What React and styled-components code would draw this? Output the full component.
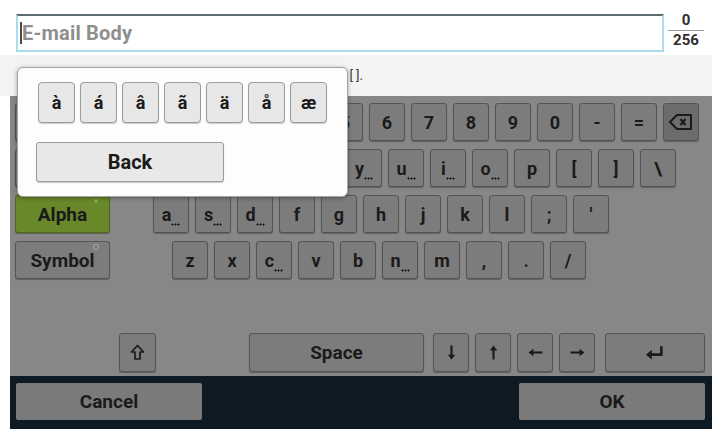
import React from "react";
import styled, { createGlobalStyle } from "styled-components";

const Global = createGlobalStyle`
  html, body { margin: 0; padding: 0; background: #ffffff; }
  body { font-family: Roboto, "Liberation Sans", Arial, sans-serif; }
  * { box-sizing: border-box; }
`;

const Screen = styled.div`
  position: relative;
  width: 712px;
  height: 432px;
  background: #ffffff;
  overflow: hidden;
  display: flex;
  flex-direction: column;
`;

const Header = styled.div`
  height: 55px;
  display: flex;
  align-items: flex-start;
  padding: 14px 0 0 16px;
  background: #ffffff;
`;

const Field = styled.div`
  width: 648px;
  height: 38px;
  border: 2px solid #a9dcef;
  border-top: 2px solid #5d6b70;
  background: #ffffff;
  display: flex;
  align-items: center;
  padding-left: 2px;
`;

const Caret = styled.span`
  width: 2px;
  height: 22px;
  background: #4a4a4a;
`;

const Placeholder = styled.span`
  font-size: 20px;
  font-weight: 700;
  color: #8e8e8e;
  letter-spacing: 0.2px;
`;

const Counter = styled.div`
  width: 38px;
  margin-left: 3px;
  margin-top: -2px;
  display: flex;
  flex-direction: column;
  align-items: center;
  font-size: 15px;
  font-weight: 700;
  color: #2e2e2e;
  line-height: 17px;
`;

const CounterLine = styled.div`
  width: 36px;
  height: 1px;
  background: #9a9a9a;
  margin: 1px 0 1px;
`;

const InfoStrip = styled.div`
  height: 41px;
  background: #f3f3f3;
  display: flex;
  align-items: center;
  padding-left: 17px;
`;

const InfoText = styled.div`
  width: 346px;
  text-align: right;
  white-space: nowrap;
  overflow: hidden;
  font-size: 13px;
  color: #3a3a3a;
`;

const Keyboard = styled.div`
  margin-left: 10px;
  height: 280px;
  background: #878787;
  display: flex;
  flex-direction: column;
  gap: 8px;
  padding: 7px 0 4px 5px;
`;

const Row = styled.div`
  display: flex;
  align-items: stretch;
  gap: 6px;
  margin-top: ${(p) => (p.$bottom ? "auto" : "0")};
  height: ${(p) => (p.$bottom ? "39px" : "38px")};
`;

const Key = styled.div`
  position: relative;
  flex: none;
  width: ${(p) => p.$w || 36}px;
  margin-left: ${(p) => p.$ml || 0}px;
  background: ${(p) =>
    p.$tone === "green" ? "#688829" : p.$tone === "dark" ? "#6c6c6c" : "#7c7c7c"};
  border: 1px solid ${(p) => (p.$tone === "green" ? "#4d681b" : "#555555")};
  border-radius: 3px;
  box-shadow: 0 1px 1px rgba(0, 0, 0, 0.3);
  display: flex;
  align-items: center;
  justify-content: center;
  font-size: ${(p) => (p.$wide ? 19 : 18)}px;
  font-weight: 700;
  color: #1a1a1a;
  user-select: none;
`;

const Dots = styled.span`
  align-self: flex-end;
  width: 9px;
  height: 3px;
  margin-bottom: 6px;
  background-image: radial-gradient(circle, #1a1a1a 0.9px, transparent 1.2px);
  background-size: 3px 3px;
`;

const Indicator = styled.span`
  position: absolute;
  top: 2px;
  right: 10px;
  width: 6px;
  height: 6px;
  border-radius: 50%;
  background: ${(p) => (p.$on ? "#7fb04a" : "#7a7a7a")};
  border: 1px solid ${(p) => (p.$on ? "#5d8a2c" : "#a8a8a8")};
`;

const BottomBar = styled.div`
  margin-left: 10px;
  height: 53px;
  background: #0e1b24;
  display: flex;
  justify-content: space-between;
  align-items: flex-start;
  padding: 7px 7px 0 6px;
`;

const BarButton = styled.div`
  width: 186px;
  height: 37px;
  background: #7a7a7a;
  border-radius: 2px;
  display: flex;
  align-items: center;
  justify-content: center;
  font-size: 19px;
  font-weight: 700;
  color: #1a1a1a;
`;

const Popup = styled.div`
  position: absolute;
  left: 17px;
  top: 67px;
  width: 331px;
  height: 130px;
  background: #fdfdfd;
  border: 1px solid #a4a4a4;
  border-radius: 6px;
  box-shadow: 0 1px 4px rgba(0, 0, 0, 0.35);
  display: flex;
  flex-direction: column;
  padding: 14px 0 0 20px;
  gap: 19px;
`;

const AccentRow = styled.div`
  display: flex;
  gap: 5px;
`;

const AccentKey = styled.div`
  width: 37px;
  height: 41px;
  background: #e7e7e7;
  border: 1px solid #9c9c9c;
  border-radius: 4px;
  box-shadow: 0 1px 1px rgba(0, 0, 0, 0.2);
  display: flex;
  align-items: center;
  justify-content: center;
  font-size: 18px;
  font-weight: 700;
  color: #1a1a1a;
`;

const BackButton = styled.div`
  width: 188px;
  height: 40px;
  margin-left: -2px;
  background: #e8e8e8;
  border: 1px solid #9c9c9c;
  border-radius: 3px;
  box-shadow: 0 1px 1px rgba(0, 0, 0, 0.2);
  display: flex;
  align-items: center;
  justify-content: center;
  font-size: 20px;
  font-weight: 700;
  color: #1a1a1a;
`;

const Backspace = () => (
  <svg width="26" height="18" viewBox="0 0 26 18">
    <path d="M9 2 H23 V16 H9 L2 9 Z" fill="none" stroke="#1a1a1a" strokeWidth="2" strokeLinejoin="round" />
    <path d="M12.5 6 L17.5 12 M17.5 6 L12.5 12" stroke="#1a1a1a" strokeWidth="2" />
  </svg>
);

const ShiftIcon = () => (
  <svg width="15" height="17" viewBox="0 0 15 17">
    <path d="M7.5 1.5 L13.5 8 H10 V15 H5 V8 H1.5 Z" fill="none" stroke="#1a1a1a" strokeWidth="1.7" strokeLinejoin="round" />
  </svg>
);

const Arrow = ({ dir }) => {
  const rot = { down: 90, up: -90, left: 180, right: 0 }[dir];
  return (
    <svg width="17" height="17" viewBox="0 0 16 16" style={{ transform: `rotate(${rot}deg)` }}>
      <path d="M1.5 8 H11" stroke="#1a1a1a" strokeWidth="2" />
      <path d="M10 4.5 L14.5 8 L10 11.5 Z" fill="#1a1a1a" />
    </svg>
  );
};

const EnterIcon = () => (
  <svg width="24" height="17" viewBox="0 0 22 16">
    <path d="M17 2 V10 H7" fill="none" stroke="#1a1a1a" strokeWidth="2.4" />
    <path d="M8 5.5 L2.5 10 L8 14.5 Z" fill="#1a1a1a" />
  </svg>
);

const accented = new Set(["y", "u", "i", "o", "a", "s", "d", "c", "n"]);

/* Keys whose labels lie under the modal accent popup are left blank:
   the reference shows nothing of them. */
const rows = [
  { side: "", gap: 7, keys: ["", "", "", "", "", "5", "6", "7", "8", "9", "0", "-", "="], back: true },
  { side: "", gap: 26, keys: ["", "", "", "", "", "y", "u", "i", "o", "p", "[", "]", "\\"] },
  { side: "Alpha", on: true, gap: 43, keys: ["a", "s", "d", "f", "g", "h", "j", "k", "l", ";", "'"] },
  { side: "Symbol", gap: 62, keys: ["z", "x", "c", "v", "b", "n", "m", ",", ".", "/"] },
];

const accents = ["à", "á", "â", "ã", "ä", "å", "æ"];

export default function App() {
  return (
    <>
      <Global />
      <Screen>
        <Header>
          <Field>
            <Caret />
            <Placeholder>E-mail Body</Placeholder>
          </Field>
          <Counter>
            <span>0</span>
            <CounterLine />
            <span>256</span>
          </Counter>
        </Header>
        <InfoStrip>
          <InfoText>Enter the E-mail body text. Usable characters: [ ].</InfoText>
        </InfoStrip>
        <Keyboard>
          {rows.map((r, ri) => (
            <Row key={ri}>
              <Key $w={95} $wide $tone={r.on ? "green" : undefined}>
                {r.side}
                {r.side && <Indicator $on={r.on} />}
              </Key>
              {r.keys.map((k, ki) => (
                <Key key={ki} $ml={ki === 0 ? r.gap - 6 : 0}>
                  {k}
                  {accented.has(k) && <Dots />}
                </Key>
              ))}
              {r.back && (
                <Key $tone="dark">
                  <Backspace />
                </Key>
              )}
            </Row>
          ))}
          <Row $bottom>
            <Key $w={37} $ml={104}>
              <ShiftIcon />
            </Key>
            <Key $w={175} $ml={87} $wide>
              Space
            </Key>
            <Key $ml={3}>
              <Arrow dir="down" />
            </Key>
            <Key>
              <Arrow dir="up" />
            </Key>
            <Key>
              <Arrow dir="left" />
            </Key>
            <Key>
              <Arrow dir="right" />
            </Key>
            <Key $w={100} $ml={4}>
              <EnterIcon />
            </Key>
          </Row>
        </Keyboard>
        <BottomBar>
          <BarButton>Cancel</BarButton>
          <BarButton>OK</BarButton>
        </BottomBar>
        <Popup>
          <AccentRow>
            {accents.map((a) => (
              <AccentKey key={a}>{a}</AccentKey>
            ))}
          </AccentRow>
          <BackButton>Back</BackButton>
        </Popup>
      </Screen>
    </>
  );
}
